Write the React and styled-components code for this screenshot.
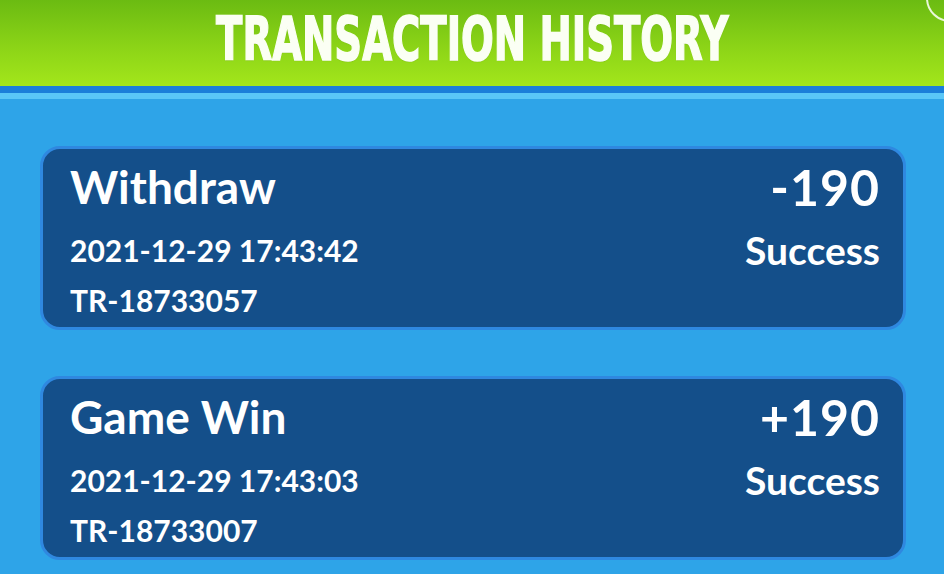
import styled, { createGlobalStyle } from "styled-components";

const Global = createGlobalStyle`
  html, body {
    margin: 0;
    padding: 0;
    height: 100%;
    overflow: hidden;
    background: #2ea4e8;
  }
  #root {
    height: 100%;
  }
`;

const transactions = [
  { id: 1, type: "Withdraw", date: "2021-12-29 17:43:42", ref: "TR-18733057", amount: "-190", status: "Success" },
  { id: 2, type: "Game Win", date: "2021-12-29 17:43:03", ref: "TR-18733007", amount: "+190", status: "Success" },
];

const Page = styled.main`
  position: relative;
  height: 100%;
  background: #2ea4e8;
  font-family: Lato, "Open Sans", sans-serif;
  color: #fff;
`;

const Header = styled.header`
  height: 86px;
  display: flex;
  align-items: center;
  justify-content: center;
  background: linear-gradient(to bottom, #6bbb12 0%, #8cd417 55%, #a3e61b 100%);
  border-bottom: 7px solid #1b7fd9;
  box-shadow: 0 6px 0 #5ac7f7;
  overflow: hidden;
`;

const Title = styled.h1`
  margin: 0;
  display: inline-block;
  font-family: "DejaVu Sans Condensed", "Liberation Sans", sans-serif;
  font-weight: 700;
  font-size: 60px;
  line-height: 1;
  color: #fbfff4;
  -webkit-text-stroke: 1.5px #fbfff4;
  transform: scaleX(0.715) translateY(-4px);
  text-shadow: 0 1px 1px rgba(60, 110, 0, 0.35);
`;

const CloseRing = styled.span`
  position: absolute;
  top: -26px;
  right: -30px;
  width: 44px;
  height: 44px;
  border: 2px solid #e9f7d8;
  border-radius: 50%;
`;

const List = styled.section`
  display: flex;
  flex-direction: column;
  gap: 46px;
  padding: 53px 38px 0 40px;
`;

const Card = styled.article`
  display: flex;
  justify-content: space-between;
  height: 184px;
  box-sizing: border-box;
  padding: 13px 23px 0 27px;
  background: #144f8a;
  border: 3px solid #2f88e0;
  border-radius: 20px;
`;

const Column = styled.div`
  display: flex;
  flex-direction: column;
  align-items: ${p => (p.$right ? "flex-end" : "flex-start")};
`;

const Type = styled.div`
  font-weight: 700;
  font-size: 46px;
  line-height: 50px;
`;

const Meta = styled.div`
  font-weight: 700;
  font-size: 30px;
  line-height: 36px;
  margin-top: ${p => p.$gap}px;
`;

const Amount = styled.div`
  font-weight: 700;
  font-size: 50px;
  line-height: 50px;
  letter-spacing: 1px;
`;

const Status = styled.div`
  font-weight: 700;
  font-size: 39px;
  line-height: 40px;
  margin-top: 18px;
`;

export default function App() {
  return (
    <Page>
      <Global />
      <Header>
        <Title>TRANSACTION HISTORY</Title>
      </Header>
      <CloseRing />
      <List>
        {transactions.map(t => (
          <Card key={t.id}>
            <Column>
              <Type>{t.type}</Type>
              <Meta $gap={20}>{t.date}</Meta>
              <Meta $gap={14}>{t.ref}</Meta>
            </Column>
            <Column $right>
              <Amount>{t.amount}</Amount>
              <Status>{t.status}</Status>
            </Column>
          </Card>
        ))}
      </List>
    </Page>
  );
}
